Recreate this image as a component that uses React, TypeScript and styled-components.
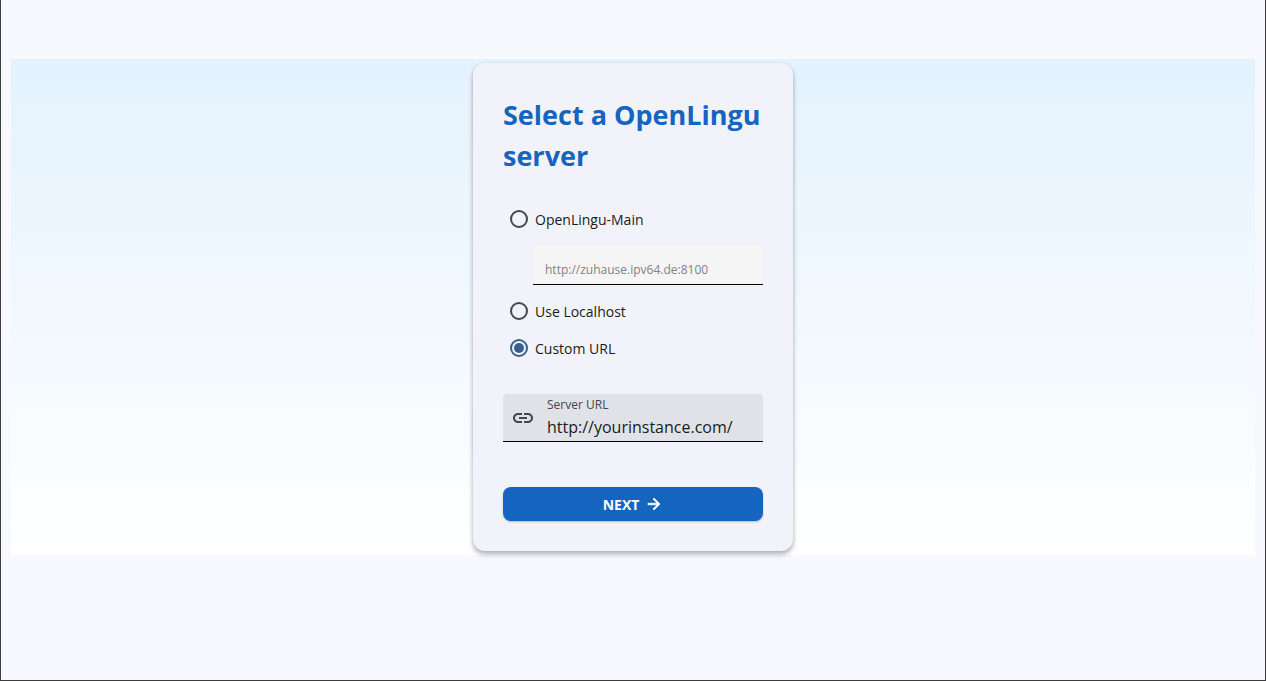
import React, { useState } from "react";
import styled, { createGlobalStyle } from "styled-components";

const GlobalStyle = createGlobalStyle`
  *, *::before, *::after { box-sizing: border-box; }
  body {
    margin: 0;
    background: #f8f9ff;
    color: #191c20;
    font-family: "Segoe UI", "Open Sans", "Noto Sans", sans-serif;
  }
`;

const Window = styled.div`
  min-height: 100vh;
  padding: 59px 10px 0;
  border: 1px solid #3c3c3c;
  border-top: 0;
  background: #f8f9ff;
`;

const Backdrop = styled.main`
  display: flex;
  justify-content: center;
  padding: 4px 0;
  background: linear-gradient(#e3f2fd, #ffffff);
`;

const Card = styled.form`
  display: flex;
  flex-direction: column;
  width: 320px;
  padding: 31px 30px 30px;
  border-radius: 12px;
  background: #f2f2fb;
  box-shadow: 0 4px 5px rgba(0, 0, 0, 0.22), 0 1px 4px rgba(0, 0, 0, 0.14);
`;

const Title = styled.h1`
  margin: 0 0 25px;
  color: #1565c0;
  font-size: 27px;
  font-weight: 700;
  line-height: 41px;
`;

const Options = styled.fieldset`
  min-width: 0;
  margin: 0;
  padding: 0;
  border: 0;
`;

const Option = styled.label`
  display: flex;
  align-items: center;
  gap: 7px;
  height: 37px;
  padding: 0 0 1px 7px;
  font-size: 14px;
  line-height: 20px;
`;

const OptionText = styled.span`
  padding-top: 1px;
`;

const Radio = styled.input`
  appearance: none;
  flex: none;
  display: grid;
  place-items: center;
  width: 18px;
  height: 18px;
  margin: 0;
  border: 2px solid #43474e;
  border-radius: 50%;

  &:checked { border-color: #36618e; }

  &:checked::before {
    content: "";
    width: 10px;
    height: 10px;
    border-radius: 50%;
    background: #36618e;
  }
`;

const AddressInput = styled.input`
  display: block;
  width: calc(100% - 30px);
  height: 40px;
  margin: 7px 0 8px 30px;
  padding: 10px 12px 0;
  border: 0;
  border-bottom: 1px solid #000000;
  border-radius: 4px 4px 0 0;
  background: #f5f5f5;
  color: #828282;
  font-family: inherit;
  font-size: 12px;
`;

const UrlField = styled.div`
  display: flex;
  align-items: center;
  gap: 12px;
  height: 48px;
  margin-top: 27px;
  padding: 0 12px 0 8px;
  border-bottom: 1px solid #000000;
  border-radius: 4px 4px 0 0;
  background: #e1e2e8;
`;

const LinkIcon = styled.svg`
  flex: none;
  width: 24px;
  height: 24px;
  fill: #43474e;
`;

const UrlText = styled.div`
  flex: 1;
  min-width: 0;
  display: flex;
  flex-direction: column;
`;

const UrlLabel = styled.label`
  color: #43474e;
  font-size: 12px;
  line-height: 18px;
`;

const UrlInput = styled.input`
  width: 100%;
  height: 26px;
  padding: 0;
  border: 0;
  outline: 0;
  background: transparent;
  color: #191c20;
  font-family: inherit;
  font-size: 16px;
`;

const NextButton = styled.button`
  display: flex;
  align-items: center;
  justify-content: center;
  gap: 6px;
  height: 34px;
  margin-top: 45px;
  padding: 0;
  border: 0;
  border-radius: 8px;
  background: #1565c0;
  box-shadow: 0 1px 2px rgba(0, 0, 0, 0.24);
  color: #ffffff;
  font-family: inherit;
  font-size: 14px;
  font-weight: 700;
  line-height: 20px;
`;

const ButtonText = styled.span`
  padding-top: 2px;
`;

const ArrowIcon = styled.svg`
  width: 18px;
  height: 18px;
  fill: #ffffff;
  stroke: #ffffff;
`;

export default function App() {
  const [server, setServer] = useState("custom");
  const [url, setUrl] = useState("http://yourinstance.com/");

  const renderOption = (value: string, text: string) => (
    <Option>
      <Radio
        type="radio"
        name="server"
        value={value}
        checked={server === value}
        onChange={() => setServer(value)}
      />
      <OptionText>{text}</OptionText>
    </Option>
  );

  return (
    <>
      <GlobalStyle />
      <Window>
        <Backdrop>
          <Card onSubmit={(event) => event.preventDefault()}>
            <Title>Select a OpenLingu server</Title>
            <Options aria-label="Server">
              {renderOption("main", "OpenLingu-Main")}
              <AddressInput
                aria-label="OpenLingu-Main address"
                value="http://zuhause.ipv64.de:8100"
                readOnly
              />
              {renderOption("localhost", "Use Localhost")}
              {renderOption("custom", "Custom URL")}
            </Options>
            <UrlField>
              <LinkIcon viewBox="0 0 24 24" aria-hidden="true">
                <path d="M17 7h-4v2h4c1.65 0 3 1.35 3 3s-1.35 3-3 3h-4v2h4c2.76 0 5-2.24 5-5s-2.24-5-5-5zm-6 8H7c-1.65 0-3-1.35-3-3s1.35-3 3-3h4V7H7c-2.76 0-5 2.24-5 5s2.24 5 5 5h4v-2zm-3-4h8v2H8z" />
              </LinkIcon>
              <UrlText>
                <UrlLabel htmlFor="server-url">Server URL</UrlLabel>
                <UrlInput
                  id="server-url"
                  value={url}
                  onChange={(event) => setUrl(event.target.value)}
                />
              </UrlText>
            </UrlField>
            <NextButton type="submit">
              <ButtonText>NEXT</ButtonText>
              <ArrowIcon viewBox="0 0 24 24" aria-hidden="true">
                <path d="M12 4l-1.41 1.41L16.17 11H4v2h12.17l-5.58 5.59L12 20l8-8z" />
              </ArrowIcon>
            </NextButton>
          </Card>
        </Backdrop>
      </Window>
    </>
  );
}
